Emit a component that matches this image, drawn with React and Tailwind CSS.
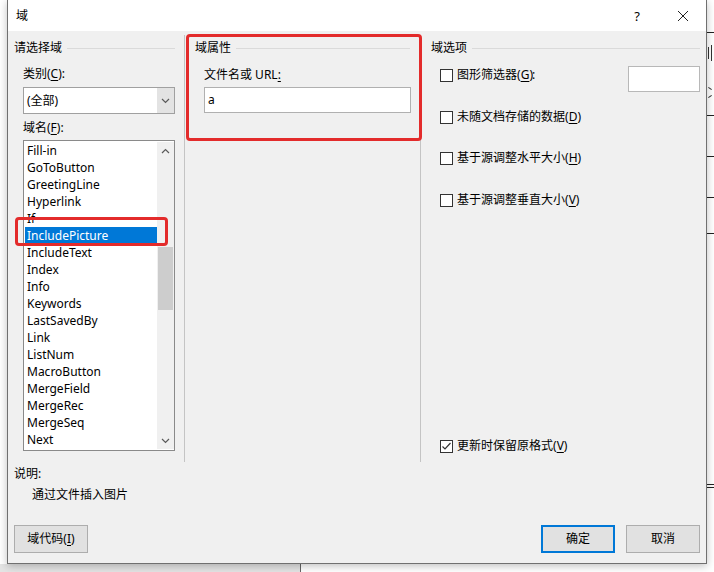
import React from "react";

function U({ c }) {
  return <span className="underline underline-offset-[2px] decoration-1">{c}</span>;
}

function Chev({ up = false }) {
  return (
    <svg width="9" height="6" viewBox="0 0 9 6">
      <polyline
        points={up ? "1,5 4.5,1.5 8,5" : "1,1 4.5,4.5 8,1"}
        fill="none"
        stroke="#5a5a5a"
        strokeWidth="1.2"
      />
    </svg>
  );
}

function GroupHeading({ text }) {
  return (
    <div className="flex items-center h-[16px]">
      <span className="whitespace-nowrap">{text}</span>
      <div className="flex-1 h-px bg-[#dadada] ml-[5px]" />
    </div>
  );
}

function Cb({ checked = false }) {
  return (
    <div className="w-[13px] h-[13px] border border-[#333333] bg-white flex items-center justify-center shrink-0">
      {checked && (
        <svg width="11" height="11" viewBox="0 0 11 11">
          <polyline points="1.5,5.5 4,8 9.5,2" fill="none" stroke="#333" strokeWidth="1.2" />
        </svg>
      )}
    </div>
  );
}

function CbRow({ label, acc, checked }) {
  return (
    <div className="flex items-center h-[16px] gap-[4px]">
      <Cb checked={checked} />
      <span className="whitespace-nowrap">
        {label}(<U c={acc} />)
      </span>
    </div>
  );
}

const items = [
  "Fill-in",
  "GoToButton",
  "GreetingLine",
  "Hyperlink",
  "If",
  "IncludePicture",
  "IncludeText",
  "Index",
  "Info",
  "Keywords",
  "LastSavedBy",
  "Link",
  "ListNum",
  "MacroButton",
  "MergeField",
  "MergeRec",
  "MergeSeq",
  "Next",
];

export default function App() {
  return (
    <div className="relative w-[714px] h-[572px] overflow-hidden bg-white text-[12px] leading-[16px] text-black font-['Noto_Sans','Noto_Sans_CJK_SC',sans-serif]">
      {/* document behind the dialog */}
      <div className="absolute left-0 top-[564px] w-[300px] h-[8px] bg-[#e4e4e4]" />
      <div className="absolute left-[300px] top-[564px] w-px h-[8px] bg-[#666]" />
      <div className="absolute left-[707px] top-[32px] w-[7px] h-px bg-[#222]" />
      <div className="absolute left-[708px] top-[47px] w-[1px] h-[12px] bg-[#333]" />
      <div className="absolute left-[711px] top-[45px] w-[1px] h-[16px] bg-[#333]" />
      <div className="absolute left-[708px] top-[88px] w-[4px] h-px bg-[#333] rotate-[35deg]" />
      <div className="absolute left-[708px] top-[96px] w-[4px] h-px bg-[#333] -rotate-[35deg]" />
      <div className="absolute left-[707px] top-[115px] w-[7px] h-px bg-[#222]" />
      <div className="absolute left-[707px] top-[156px] w-[7px] h-px bg-[#222]" />
      <div className="absolute left-[707px] top-[197px] w-[7px] h-px bg-[#222]" />
      <div className="absolute left-[707px] top-[233px] w-[7px] h-px bg-[#222]" />
      <div className="absolute left-[707px] top-[484px] w-[7px] h-px bg-[#222]" />
      <div className="absolute left-[707px] top-[487px] w-[7px] h-px bg-[#222]" />

      {/* dialog window */}
      <div className="pl-[7px]">
        <div className="relative w-[700px] h-[564px] bg-[#f0f0f0] border-x border-b border-[#707070] shadow-[0_2px_8px_rgba(0,0,0,0.25)] flex flex-col">
          {/* title bar */}
          <div className="h-[31px] bg-white flex items-center shrink-0">
            <span className="pl-[8px]">域</span>
            <div className="ml-auto flex h-full">
              <div className="w-[46px] h-full flex items-center justify-center text-[13px]">?</div>
              <div className="w-[46px] h-full flex items-center justify-center">
                <svg width="12" height="12" viewBox="0 0 12 12">
                  <path d="M1 1 L11 11 M11 1 L1 11" stroke="#222" strokeWidth="1" />
                </svg>
              </div>
            </div>
          </div>

          {/* columns */}
          <div className="flex mt-[4px] h-[427px]">
            {/* left column */}
            <div className="w-[177px] border-r border-[#c4c4c4] pl-[6px] pr-[9px] pt-[5px] flex flex-col">
              <GroupHeading text="请选择域" />
              <div className="pl-[9px]">
                <div className="mt-[10px] h-[16px]">
                  类别(<U c="C" />):
                </div>
                <div className="mt-[5px] w-[152px] h-[27px] border border-[#a0a0a0] bg-white flex">
                  <div className="flex-1 flex items-center pl-[3px]">(全部)</div>
                  <div className="w-[17px] bg-[#e3e3e3] flex items-center justify-center">
                    <Chev />
                  </div>
                </div>
                <div className="mt-[6px] h-[16px]">
                  域名(<U c="F" />):
                </div>
                <div className="mt-[4px] w-[152px] h-[311px] border border-[#8a8a8a] bg-white flex py-[1px] pl-[1px]">
                  <div className="w-[132px] flex flex-col">
                    {items.map((t) => (
                      <div
                        key={t}
                        className={
                          "h-[17px] flex items-center pl-[2px] whitespace-nowrap " +
                          (t === "IncludePicture" ? "bg-[#0078d7] text-white" : "")
                        }
                      >
                        {t}
                      </div>
                    ))}
                  </div>
                  <div className="w-[17px] bg-[#f0f0f0] flex flex-col items-center">
                    <div className="h-[17px] flex items-center justify-center">
                      <Chev up />
                    </div>
                    <div className="mt-[88px] w-[15px] h-[63px] bg-[#cdcdcd]" />
                    <div className="mt-auto h-[17px] flex items-center justify-center">
                      <Chev />
                    </div>
                  </div>
                </div>
              </div>
            </div>

            {/* middle column */}
            <div className="w-[236px] border-r border-[#c4c4c4] pl-[10px] pr-[10px] pt-[5px] flex flex-col">
              <GroupHeading text="域属性" />
              <div className="pl-[9px]">
                <div className="mt-[11px] h-[16px]">
                  文件名或 URL<U c=":" />
                </div>
                <div className="mt-[4px] w-[207px] h-[26px] border border-[#b0b0b0] bg-white flex items-center pl-[3px]">
                  a
                </div>
              </div>
            </div>

            {/* right column */}
            <div className="flex-1 pl-[10px] pr-[6px] pt-[5px] pb-[8px] flex flex-col">
              <GroupHeading text="域选项" />
              <div className="pl-[9px] flex flex-col flex-1">
                <div className="mt-[10px] flex items-start">
                  <div className="pt-[1px]">
                    <CbRow label="图形筛选器" acc="G" />
                  </div>
                  <span className="-ml-[1px] pt-[1px]">:</span>
                  <div className="ml-auto w-[72px] h-[26px] border border-[#b8b8b8] bg-white" />
                </div>
                <div className="mt-[17px]">
                  <CbRow label="未随文档存储的数据" acc="D" />
                </div>
                <div className="mt-[25px]">
                  <CbRow label="基于源调整水平大小" acc="H" />
                </div>
                <div className="mt-[26px]">
                  <CbRow label="基于源调整垂直大小" acc="V" />
                </div>
                <div className="mt-auto">
                  <CbRow label="更新时保留原格式" acc="V" checked />
                </div>
              </div>
            </div>
          </div>

          {/* description */}
          <div className="pl-[6px] mt-[4px] h-[16px]">说明:</div>
          <div className="pl-[24px] mt-[5px] h-[16px]">通过文件插入图片</div>

          {/* buttons */}
          <div className="mt-[22px] flex pl-[6px] pr-[6px]">
            <div className="w-[74px] h-[28px] bg-[#e1e1e1] border border-[#adadad] flex items-center justify-center">
              域代码(<U c="I" />)
            </div>
            <div className="ml-auto w-[74px] h-[28px] bg-[#e1e1e1] border-2 border-[#0078d7] flex items-center justify-center">
              确定
            </div>
            <div className="ml-[11px] w-[74px] h-[28px] bg-[#e1e1e1] border border-[#adadad] flex items-center justify-center">
              取消
            </div>
          </div>
        </div>
      </div>

      {/* red annotation boxes */}
      <div className="absolute left-[15px] top-[217px] w-[153px] h-[29px] border-[3px] border-[#e32b2b] rounded-[4px]" />
      <div className="absolute left-[186px] top-[34px] w-[236px] h-[107px] border-[3px] border-[#e32b2b] rounded-[4px]" />
    </div>
  );
}
